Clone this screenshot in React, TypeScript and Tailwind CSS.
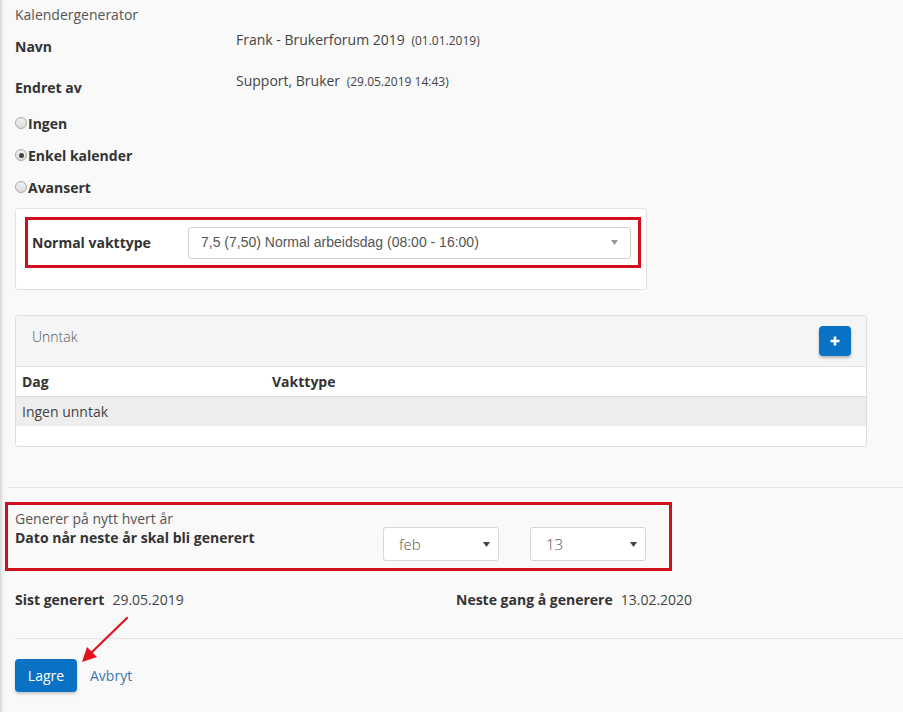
import React from "react";

const Caret = ({ className }: { className?: string }) => (
  <svg width="7" height="5" viewBox="0 0 7 5" className={className}>
    <path d="M0 0 L7 0 L3.5 5 Z" fill="currentColor" />
  </svg>
);

export default function App() {
  return (
    <div
      className="relative min-h-[712px] w-[903px] overflow-hidden bg-[linear-gradient(to_right,#d4d4d4,#f3f3f3_3px,#f9f9f9_6px)] text-[14px] text-[#333]"
      style={{ fontFamily: '"Open Sans", "Noto Sans", sans-serif' }}
    >
      <div className="pl-[15px] pt-[5px]">
        <div className="h-[20px] leading-[20px] text-[#555]">Kalendergenerator</div>

        {/* Navn */}
        <div className="flex h-[41px]">
          <div className="w-[221px] pt-[12px] font-bold leading-[20px]">Navn</div>
          <div className="pt-[5px] leading-[20px] text-[#444]">
            Frank - Brukerforum 2019 <span className="ml-[3px] text-[12px]">(01.01.2019)</span>
          </div>
        </div>
        {/* Endret av */}
        <div className="flex h-[41px]">
          <div className="w-[221px] pt-[12px] font-bold leading-[20px]">Endret av</div>
          <div className="pt-[5px] leading-[20px] text-[#444]">
            Support, Bruker <span className="ml-[3px] text-[12px]">(29.05.2019 14:43)</span>
          </div>
        </div>

        {/* Radios */}
        <div className="mt-[6px] flex flex-col gap-[12px]">
          {[
            { label: "Ingen", checked: false },
            { label: "Enkel kalender", checked: true },
            { label: "Avansert", checked: false },
          ].map((r) => (
            <div key={r.label} className="flex h-[20px] items-center">
              <span className="mr-[1px] flex h-[12px] w-[12px] items-center justify-center rounded-full border border-[#a8a8a8] bg-[linear-gradient(#f0f0f0,#dcdcdc)]">
                {r.checked && <span className="h-[5px] w-[5px] rounded-full bg-[#444]" />}
              </span>
              <span className="font-bold">{r.label}</span>
            </div>
          ))}
        </div>

        {/* Panel 1 */}
        <div className="mt-[11px] h-[82px] w-[632px] rounded-[3px] border border-[#e2e2e2] bg-white pl-[9px] pt-[8px]">
          <div className="flex h-[51px] w-[616px] items-center border-[3px] border-[#d0101c] pl-[4px]">
            <div className="w-[156px] font-bold">Normal vakttype</div>
            <div
              className="flex h-[32px] w-[443px] items-center justify-between rounded-[3px] border border-[#cfcfcf] bg-white pl-[12px] pr-[12px] text-[#555]"
              style={{ fontFamily: '"Liberation Sans", Arial, sans-serif' }}
            >
              <span>7,5 (7,50) Normal arbeidsdag (08:00 - 16:00)</span>
              <Caret className="text-[#999]" />
            </div>
          </div>
        </div>

        {/* Panel 2 */}
        <div className="mt-[25px] w-[852px] overflow-hidden rounded-[3px] border border-[#dedede] bg-white">
          <div className="flex h-[51px] items-start justify-between border-b border-[#e2e2e2] bg-[#f5f5f5] pl-[16px] pr-[15px]">
            <div className="pt-[10px] font-light text-[#555]">Unntak</div>
            <div className="mt-[10px] flex h-[30px] w-[32px] items-center justify-center rounded-[4px] bg-[#0a72c4] shadow-[0_2px_3px_rgba(0,0,0,0.25)]">
              <svg width="12" height="12" viewBox="0 0 12 12">
                <path d="M6 1.5 V10.5 M1.5 6 H10.5" stroke="white" strokeWidth="2.6" />
              </svg>
            </div>
          </div>
          <div className="flex h-[30px] items-center border-b border-[#dcdcdc] pl-[6px] font-bold">
            <div className="w-[250px]">Dag</div>
            <div>Vakttype</div>
          </div>
          <div className="flex h-[29px] items-center bg-[#eeeeee] pl-[6px] text-[#444]">Ingen unntak</div>
          <div className="h-[20px]" />
        </div>
      </div>

      <div className="ml-[8px] mt-[40px] h-px bg-[#e6e6e6]" />

      {/* Red box 2 */}
      <div className="ml-[5px] mt-[14px] flex h-[69px] w-[667px] border-[3px] border-[#d0101c] pl-[7px]">
        <div className="w-[368px] pt-[4px]">
          <div className="h-[19px] leading-[19px] text-[#555]">Generer på nytt hvert år</div>
          <div className="font-bold leading-[19px]">Dato når neste år skal bli generert</div>
        </div>
        <div className="flex items-start gap-[31px] pt-[22px]">
          <div className="flex h-[34px] w-[116px] items-center justify-between rounded-[3px] border border-[#d6d6d6] bg-white pl-[15px] pr-[8px] text-[15px] font-light text-[#555]">
            <span>feb</span>
            <Caret className="text-[#444]" />
          </div>
          <div className="flex h-[34px] w-[116px] items-center justify-between rounded-[3px] border border-[#d6d6d6] bg-white pl-[15px] pr-[8px] text-[15px] font-light text-[#555]">
            <span>13</span>
            <Caret className="text-[#444]" />
          </div>
        </div>
      </div>

      <div className="mt-[18px] flex h-[20px] items-center pl-[15px]">
        <div className="w-[441px]">
          <span className="font-bold">Sist generert</span>
          <span className="ml-[8px] text-[#444]">29.05.2019</span>
        </div>
        <div>
          <span className="font-bold">Neste gang å generere</span>
          <span className="ml-[8px] text-[#444]">13.02.2020</span>
        </div>
      </div>

      <div className="ml-[15px] mt-[29px] h-px bg-[#e6e6e6]" />

      <div className="mt-[20px] flex items-center pl-[15px]">
        <div className="flex h-[33px] w-[62px] items-center justify-center rounded-[4px] bg-[#0a72c4] text-white shadow-[0_2px_3px_rgba(0,0,0,0.2)]">
          Lagre
        </div>
        <div className="ml-[13px] text-[#3a76b0]">Avbryt</div>
      </div>

      {/* annotation arrow */}
      <svg className="absolute left-[70px] top-[612px]" width="64" height="56" viewBox="0 0 64 56">
        <line x1="57" y1="6" x2="20" y2="42" stroke="#e0141e" strokeWidth="2.2" strokeLinecap="round" />
        <path d="M12 50 L17 35 L27 45 Z" fill="#e0141e" />
      </svg>
    </div>
  );
}
